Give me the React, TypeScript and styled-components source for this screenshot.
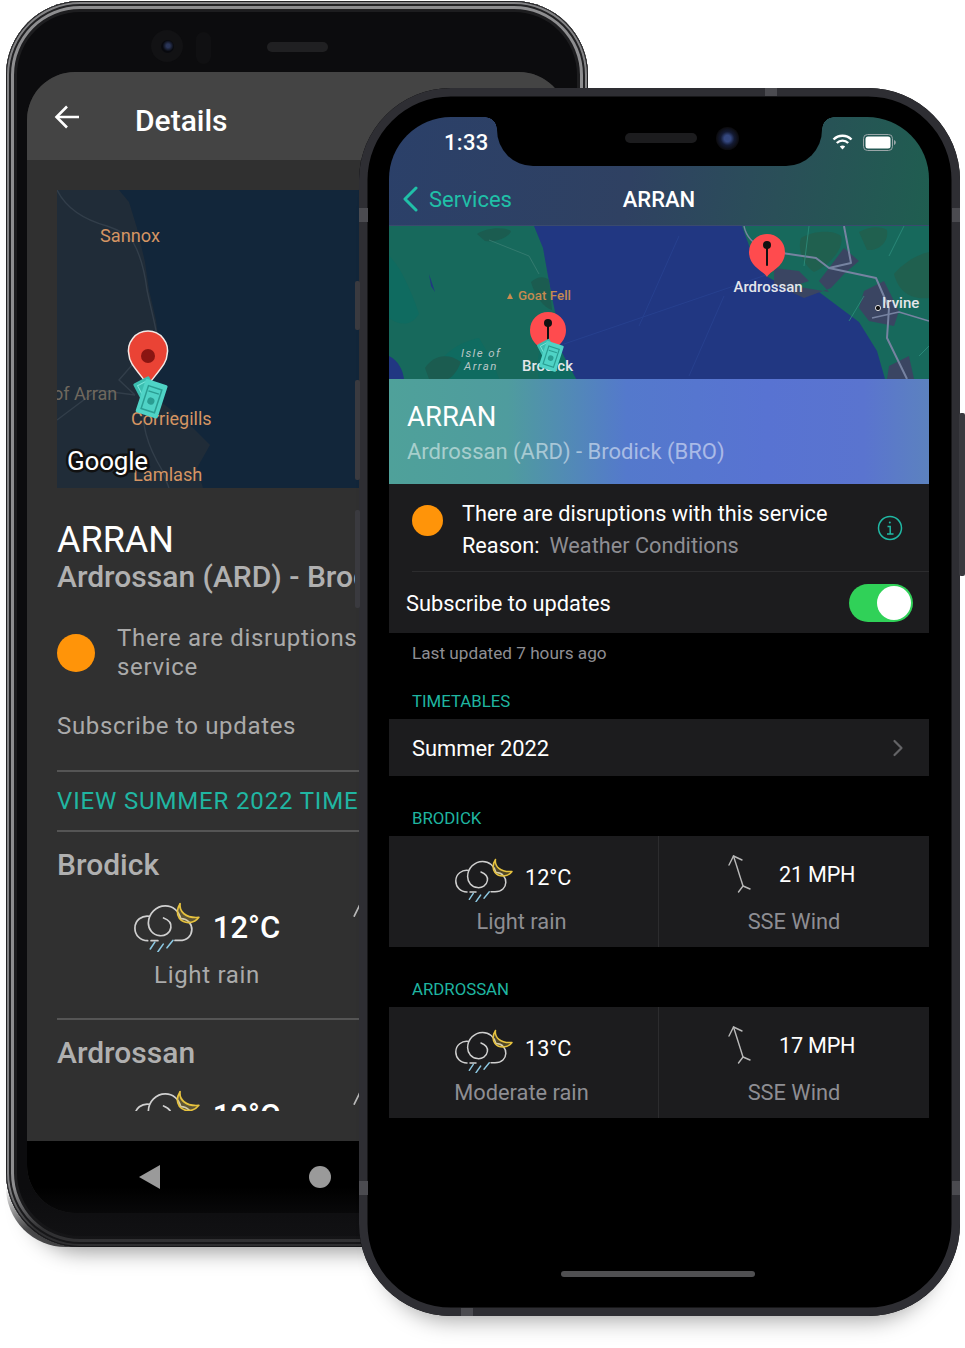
import React from 'react';
import styled, { createGlobalStyle } from 'styled-components';

const Global = createGlobalStyle`
  html, body { margin: 0; padding: 0; background: #fff; }
  * { box-sizing: border-box; }
`;

const Canvas = styled.div`
  position: relative;
  width: 965px;
  height: 1348px;
  overflow: hidden;
  background: #fff;
  font-family: Roboto, "Liberation Sans", sans-serif;
`;

/* ---------- Android phone ---------- */
const AndroidBody = styled.div`
  position: absolute;
  left: 6px;
  top: 1px;
  width: 582px;
  height: 1246px;
  border-radius: 74px;
  background: #0c0c0e;
  padding: 71px 21px 33px;
  box-shadow:
    inset 0 0 0 1px #222224,
    inset 0 0 0 3px #838385,
    inset 0 0 0 5px #222224,
    inset 0 0 0 8px #8e8e90,
    inset 0 0 0 11px #1d1d1f,
    0 26px 22px -22px rgba(0, 0, 0, 0.42);
  &::after {
    content: '';
    position: absolute;
    left: 0;
    right: 0;
    bottom: 0;
    height: 60px;
    border-radius: 0 0 74px 74px;
    background: linear-gradient(180deg, rgba(18, 18, 20, 0) 0%, rgba(18, 18, 20, 0.75) 70%);
  }
`;
const AndroidCamera = styled.div`
  position: absolute;
  left: 145px;
  top: 29px;
  width: 32px;
  height: 32px;
  border-radius: 50%;
  background: #121214;
  display: flex;
  align-items: center;
  justify-content: center;
  &::after {
    content: '';
    width: 13px;
    height: 13px;
    border-radius: 50%;
    background: radial-gradient(circle at 55% 45%, #2a3558 0 18%, #08090e 55%);
  }
`;
const AndroidSensor = styled.div`
  position: absolute;
  left: 190px;
  top: 31px;
  width: 15px;
  height: 32px;
  border-radius: 8px;
  background: #101012;
`;
const AndroidSpeaker = styled.div`
  position: absolute;
  left: 261px;
  top: 41px;
  width: 61px;
  height: 10px;
  border-radius: 5px;
  background: #202022;
`;
const AndroidScreen = styled.div`
  width: 540px;
  height: 1141px;
  border-radius: 48px;
  overflow: hidden;
  display: flex;
  flex-direction: column;
  background: #303030;
`;
const AppBar = styled.div`
  height: 88px;
  flex: none;
  background: #444444;
  display: flex;
  align-items: center;
  padding: 8px 0 0 27px;
  gap: 55px;
  svg { margin-top: -6px; }
`;
const AppTitle = styled.div`
  color: #fff;
  font-size: 30px;
  font-weight: 500;
`;
const AndroidScroll = styled.div`
  height: 951px;
  flex: none;
  overflow: hidden;
  padding: 30px 30px 0;
`;
const AndroidFill = styled.div`
  height: 30px;
  flex: none;
`;
const AndroidMapBox = styled.div`
  width: 480px;
  height: 298px;
  svg { display: block; }
`;
const ATitle = styled.div`
  margin-top: 34px;
  color: #fff;
  font-size: 36px;
  line-height: 36px;
`;
const ASubtitle = styled.div`
  color: #b0b0b0;
  font-size: 30px;
  font-weight: 500;
  line-height: 38px;
  white-space: nowrap;
`;
const AStatusRow = styled.div`
  margin-top: 28px;
  display: flex;
  align-items: center;
  gap: 22px;
`;
const Dot = styled.div<{ $size: number }>`
  flex: none;
  width: ${p => p.$size}px;
  height: ${p => p.$size}px;
  border-radius: 50%;
  background: #ff9409;
`;
const AStatusText = styled.div`
  width: 400px;
  color: #aaaaaa;
  font-size: 24px;
  line-height: 29px;
  letter-spacing: 0.68px;
`;
const ASubscribe = styled.div`
  margin-top: 29px;
  color: #aaaaaa;
  font-size: 24px;
  line-height: 30px;
  letter-spacing: 0.68px;
`;
const ADivider = styled.div<{ $top: number }>`
  margin-top: ${p => p.$top}px;
  height: 2px;
  background: #555555;
`;
const ALink = styled.div`
  height: 58px;
  display: flex;
  align-items: center;
  color: #20b6a2;
  font-size: 24px;
  letter-spacing: 0.85px;
  white-space: nowrap;
`;
const APlace = styled.div`
  margin-top: 15px;
  color: #b0b0b0;
  font-size: 30px;
  font-weight: 500;
  line-height: 36px;
`;
const AWeather = styled.div`
  margin-top: 21px;
  display: grid;
  grid-template-columns: 300px 1fr;
`;
const AWeatherCell = styled.div`
  display: flex;
  flex-direction: column;
  align-items: center;
`;
const AWeatherTop = styled.div`
  height: 46px;
  display: flex;
  align-items: center;
  gap: 13px;
`;
const ATemp = styled.div`
  color: #fff;
  font-size: 31px;
  font-weight: 500;
`;
const AWeatherLabel = styled.div`
  margin-top: 10px;
  color: #aaaaaa;
  font-size: 24px;
  line-height: 30px;
  letter-spacing: 0.68px;
`;
const AWind = styled.div`
  margin-left: -4px;
`;
const NavBar = styled.div`
  height: 72px;
  flex: none;
  background: #000;
  display: flex;
  align-items: center;
  padding-left: 112px;
  gap: 148px;
`;
const NavCircle = styled.div`
  width: 22px;
  height: 22px;
  border-radius: 50%;
  background: #9a9a9a;
`;

/* ---------- iPhone ---------- */
const IphoneBody = styled.div`
  position: absolute;
  left: 359px;
  top: 88px;
  width: 601px;
  height: 1228px;
  border-radius: 92px;
  background: #000;
  padding: 29px 30px;
  box-shadow:
    inset 0 0 0 8.5px #2e2e33,
    0 26px 22px -22px rgba(0, 0, 0, 0.36);
`;
const SideButton = styled.div<{ $top: number; $h: number; $side: 'l' | 'r' }>`
  position: absolute;
  top: ${p => p.$top}px;
  height: ${p => p.$h}px;
  width: ${p => (p.$side === 'l' ? 5 : 6)}px;
  ${p => (p.$side === 'l' ? 'left: -4px;' : 'right: -5px;')}
  background: #3a3a3f;
  border-radius: 2px;
`;
const Band = styled.div<{ $x: number; $y: number; $w: number; $h: number }>`
  position: absolute;
  left: ${p => p.$x}px;
  top: ${p => p.$y}px;
  width: ${p => p.$w}px;
  height: ${p => p.$h}px;
  background: #4b4b50;
`;
const IScreen = styled.div`
  position: relative;
  width: 540px;
  height: 1170px;
  border-radius: 62px;
  overflow: hidden;
  background: #000;
  display: flex;
  flex-direction: column;
`;
const Notch = styled.div`
  position: absolute;
  left: 108px;
  top: 0;
  width: 325px;
  height: 49px;
  background: #000;
  border-radius: 0 0 36px 36px;
  &::before, &::after {
    content: '';
    position: absolute;
    top: 0;
    width: 12px;
    height: 12px;
  }
  &::before { left: -12px; background: radial-gradient(circle at 0 100%, transparent 11.5px, #000 12px); }
  &::after { right: -12px; background: radial-gradient(circle at 100% 100%, transparent 11.5px, #000 12px); }
`;
const NotchSpeaker = styled.div`
  position: absolute;
  left: 128px;
  top: 16px;
  width: 72px;
  height: 10px;
  border-radius: 5px;
  background: #1c1c1e;
`;
const NotchCamera = styled.div`
  position: absolute;
  left: 219px;
  top: 10px;
  width: 23px;
  height: 23px;
  border-radius: 50%;
  background: radial-gradient(circle at 50% 50%, #34477f 0 20%, #131a33 42%, #0c0c10 68%);
`;
const INavArea = styled.div`
  height: 109px;
  flex: none;
  background: linear-gradient(100deg, #2b4069 0%, #2f4162 45%, #2a4f58 72%, #1f5e50 100%);
  border-bottom: 1px solid #3a4a6e;
`;
const IStatus = styled.div`
  height: 50px;
  display: flex;
  align-items: center;
  padding: 0 33px 0 55px;
  justify-content: space-between;
`;
const ITime = styled.div`
  color: #fff;
  font-size: 22px;
  font-weight: 500;
  letter-spacing: 0.3px;
`;
const IStatusIcons = styled.div`
  display: flex;
  align-items: center;
  gap: 10px;
`;
const INavRow = styled.div`
  position: relative;
  height: 59px;
  padding-top: 5px;
  display: flex;
  align-items: center;
  justify-content: center;
`;
const INavBack = styled.div`
  position: absolute;
  left: 14px;
  top: 5px;
  bottom: 0;
  display: flex;
  align-items: center;
  gap: 11px;
  color: #20c0a8;
  font-size: 22px;
`;
const INavTitle = styled.div`
  color: #fff;
  font-size: 22px;
  font-weight: 500;
`;
const IMapBox = styled.div`
  height: 153px;
  flex: none;
  svg { display: block; }
`;
const IHero = styled.div`
  height: 105px;
  flex: none;
  padding: 20px 18px 0;
  background: linear-gradient(90deg, #4fa19a 0%, #4f9c9e 22%, #5479cc 44%, #5873d2 70%, #5a74cf 88%, #5c82bf 100%);
`;
const IHeroTitle = styled.div`
  color: #fff;
  font-size: 27.5px;
  line-height: 36px;
`;
const IHeroSub = styled.div`
  color: rgba(255, 255, 255, 0.5);
  font-size: 22px;
  line-height: 34px;
`;
const IPanel = styled.div`
  background: #1c1c1e;
  flex: none;
`;
const IStatusRow = styled.div`
  height: 88px;
  position: relative;
  display: flex;
  align-items: center;
  padding: 0 26px 0 23px;
  &::after {
    content: '';
    position: absolute;
    left: 23px;
    right: 0;
    bottom: 0;
    height: 1px;
    background: #2c2c2e;
  }
`;
const IStatusCopy = styled.div`
  flex: 1;
  margin-left: 19px;
  margin-top: 3px;
  color: #fff;
  font-size: 21.7px;
  line-height: 32px;
`;
const Grey = styled.span`
  color: #8e8e93;
  margin-left: 10px;
`;
const IDotWrap = styled.div`
  margin-top: -16px;
`;
const ISubscribe = styled.div`
  height: 61px;
  display: flex;
  align-items: center;
  justify-content: space-between;
  padding: 0 16px 0 17px;
  color: #fff;
  font-size: 21.8px;
  span { margin-top: 2px; }
`;
const Toggle = styled.div`
  width: 64px;
  height: 38px;
  border-radius: 19px;
  background: #30d158;
  padding: 2px;
  display: flex;
  justify-content: flex-end;
  &::after {
    content: '';
    width: 34px;
    height: 34px;
    border-radius: 50%;
    background: #fff;
  }
`;
const ILast = styled.div`
  height: 40px;
  flex: none;
  display: flex;
  align-items: center;
  padding-left: 23px;
  color: #8e8e93;
  font-size: 17.2px;
`;
const ISection = styled.div<{ $h: number }>`
  height: ${p => p.$h}px;
  flex: none;
  display: flex;
  align-items: flex-end;
  padding: 0 0 8px 23px;
  color: #1fb5a0;
  font-size: 16.8px;
  line-height: 20px;
`;
const ITimetable = styled.div`
  height: 57px;
  flex: none;
  background: #1c1c1e;
  display: flex;
  align-items: center;
  justify-content: space-between;
  padding: 2px 25px 0 23px;
  color: #fff;
  font-size: 21.9px;
  svg { margin-top: -2px; }
`;
const IWeatherGrid = styled.div`
  height: 111px;
  flex: none;
  background: #1c1c1e;
  display: grid;
  grid-template-columns: 270px 1fr;
`;
const IWeatherCell = styled.div`
  border-right: 1px solid #2c2c2e;
  padding: 21px 4px 0 0;
  display: flex;
  flex-direction: column;
  align-items: center;
`;
const IWeatherTop = styled.div`
  width: 100%;
  height: 42px;
  padding-left: 66px;
  display: flex;
  align-items: center;
  gap: 12px;
  color: #fff;
  font-size: 21.6px;
  svg { margin-top: 3px; }
  span { margin-top: -1px; }
`;
const IWeatherLabel = styled.div<{ $top: number }>`
  margin-top: ${p => p.$top}px;
  color: #8e8e93;
  font-size: 21.8px;
  line-height: 26px;
`;
const IWindCell = styled.div`
  padding-top: 19px;
  display: flex;
  flex-direction: column;
  align-items: center;
`;
const IWindTop = styled.div`
  width: 100%;
  height: 38px;
  padding-left: 69px;
  display: flex;
  align-items: center;
  gap: 27px;
  color: #fff;
  font-size: 21.6px;
  letter-spacing: -0.2px;
`;
const HomeBar = styled.div`
  position: absolute;
  left: 172px;
  bottom: 10px;
  width: 194px;
  height: 6px;
  border-radius: 3px;
  background: #505052;
`;

/* ---------- drawings ---------- */
const Cloud = ({ w }: { w: number }) => (
  <svg width={w} height={(w * 44) / 58} viewBox="0 0 58 44" fill="none" strokeLinecap="round">
    <g stroke="#cfcfcf" strokeWidth="1.5">
      <path d="M12 34 C5.5 34 0.8 29 0.8 23 C0.8 16 7 11.5 13.5 12.5" />
      <path d="M26 14 C30 15.5 33 18.5 32.4 22.5 C31.6 27.5 27 30 22.5 29.6 C16.5 29 12.6 24 12.6 18.5 C12.8 10 19.5 3.5 27.5 3.4 C34 3.3 39.5 8 41 14.6" />
      <path d="M15 34 L21 34" />
      <path d="M41 14.6 C47.5 14.6 51 19.5 50.8 24.5 C50.6 29.5 47 33.8 40 33.8 L36 33.8" />
    </g>
    <g stroke="#8cc8e2" strokeWidth="1.4">
      <path d="M18.3 35.3 L14.3 41.3" />
      <path d="M25.7 37 L21 43.7" />
      <path d="M34.3 33.7 L29 40.3" />
    </g>
    <path
      d="M40.5 1.5 C39.5 8 45 14.5 57 13.5 C53 19 44.5 19.8 40 14.5 C37.6 11 37.6 6 40.5 1.5 Z"
      fill="#e6c23e"
      fillOpacity="0.25"
      stroke="#e6c23e"
      strokeWidth="1.5"
      strokeLinejoin="round"
    />
  </svg>
);

const WindArrow = ({ h = 38 }: { h?: number }) => (
  <svg width={(h * 24) / 38} height={h} viewBox="0 0 24 38" fill="none" stroke="#b9b9b9" strokeWidth="1.4" strokeLinecap="round" strokeLinejoin="round">
    <path d="M1 10 L5.5 1 L14 5" />
    <path d="M5.5 1 L15 31" />
    <path d="M10.5 37 L15 31 L22 34" />
  </svg>
);

const Money = () => (
  <g>
    <g transform="translate(-5 -9) rotate(-28)">
      <rect x="-9" y="-9" width="18" height="22" fill="#3cbdb0" rx="1.5" />
      <rect x="-5.5" y="-5.5" width="11" height="15" fill="none" stroke="#7de8dc" strokeWidth="1" />
    </g>
    <g transform="translate(1 2) rotate(18)">
      <rect x="-11" y="-18" width="23" height="35" fill="#4fd3c6" rx="1.5" />
      <rect x="-6.5" y="-12" width="14" height="24" fill="none" stroke="#2a9d92" strokeWidth="1.5" />
      <circle cx="0.5" cy="2" r="3.6" fill="#2a9d92" />
      <path d="M-5 -7 H6" stroke="#2a9d92" strokeWidth="1.4" />
    </g>
  </g>
);

const AndroidMap = () => (
  <svg width="480" height="298" viewBox="0 0 480 298">
    <rect width="480" height="298" fill="#12263a" />
    <path d="M0 0 H62 L72 12 L80 38 L88 72 L92 100 L99 130 L103 160 L98 180 L88 200 L108 215 L133 235 L153 255 L140 278 L146 298 H0 Z" fill="#202c38" />
    <g fill="none" stroke="#323e4a" strokeWidth="1.4">
      <path d="M0 0 C10 20 28 30 50 36 C62 40 70 44 76 52 C84 66 88 84 90 100 C94 120 100 140 102 158" />
      <path d="M78 205 L62 190 L75 175 L85 170" />
      <path d="M86 205 C84 235 90 255 105 280 L112 298" />
      <path d="M0 230 L40 200 L78 205" />
    </g>
    <g fontFamily="Roboto, sans-serif" fontSize="18.2" fill="#d59563">
      <text x="43" y="52">Sannox</text>
      <text x="74" y="235" fontSize="18">Corriegills</text>
      <text x="76" y="291">Lamlash</text>
    </g>
    <text x="-4" y="210" fontFamily="Roboto, sans-serif" fontSize="18" fill="#6f685e">of Arran</text>
    <text x="10" y="280" fontFamily="Roboto, sans-serif" fontSize="26" fontWeight="400" fill="#fff" stroke="#111" strokeWidth="5" paintOrder="stroke" letterSpacing="-0.2">Google</text>
    <path d="M91 195 C78 178 72 172 72 165 A19.5 19.5 0 1 1 110 165 C110 172 104 178 91 195 Z" fill="#ea4335" stroke="#f3e9e6" strokeWidth="1.5" />
    <circle cx="91" cy="166" r="7" fill="#8a1512" />
    <g transform="translate(93 207)"><Money /></g>
  </svg>
);

const RedPin = ({ x, y }: { x: number; y: number }) => (
  <g transform={`translate(${x} ${y})`}>
    <path d="M0 24 C-3 18 -18 14 -18 -1 A18 18 0 1 1 18 -1 C18 14 3 18 0 24 Z" fill="#ff4b4e" />
    <path d="M0 -6 L0 12" stroke="#111" strokeWidth="2" strokeLinecap="round" />
    <circle cx="0" cy="-8" r="4" fill="#111" />
  </g>
);

const IosMap = () => (
  <svg width="540" height="153" viewBox="0 0 540 153">
    <rect width="540" height="153" fill="#213782" />
    <g fill="none" stroke="#27408e" strokeWidth="1">
      <path d="M175 118 L380 48" />
      <path d="M250 100 L290 10" />
      <path d="M300 150 L335 70" />
    </g>
    <path d="M0 0 H145 L154 22 L159 50 L164 76 L169 100 L172 125 L187 153 H0 Z" fill="#17695c" />
    <path d="M0 130 C10 135 14 145 15 153 H0 Z" fill="#213782" />
    <g fill="#0f6b60">
      <path d="M0 30 C12 40 24 70 30 88 C22 100 12 100 0 92 Z" />
      <path d="M42 153 C50 128 70 116 90 112 C98 125 106 140 110 153 Z" />
      <path d="M150 153 C146 128 152 108 170 112 L172 125 L187 153 Z" />
    </g>
    <g fill="#1b5c50">
      <path d="M88 8 C95 2 115 0 122 5 C120 12 105 17 96 15 Z" />
      <path d="M142 56 C148 50 156 50 160 54 L163 84 C155 82 146 70 142 56 Z" />
      <path d="M36 142 C44 130 58 126 72 136 C68 146 62 153 58 153 H40 Z" />
    </g>
    <path d="M40 48 L44 60 L46 66 L42 60 Z" fill="#213782" />
    <path d="M100 14 L140 30 L150 48" fill="none" stroke="#3a7f74" strokeWidth="0.8" />
    <path d="M353 0 L362 25 L377 50 L395 60 L430 66 L470 96 L488 125 L496 153 H540 V0 Z" fill="#17695c" />
    <g fill="#20604f">
      <path d="M412 12 C425 4 445 4 452 10 C456 22 440 40 425 46 C415 40 408 24 412 12 Z" />
      <path d="M505 48 C515 36 530 28 540 26 V72 C525 74 510 68 505 48 Z" />
      <path d="M470 6 C480 0 492 0 498 4 C500 16 490 25 478 24 Z" />
    </g>
    <g fill="#3a4562">
      <path d="M385 42 L410 45 L420 55 L405 60 L440 66 L430 55 L440 42 L455 22 L470 35 L455 48 L442 62 L415 72 L385 58 Z" />
      <path d="M475 65 L495 55 L510 85 L505 100 L480 95 L470 82 Z" />
      <path d="M500 140 L520 130 L525 153 H498 Z" />
    </g>
    <g fill="none" stroke="#7683a1" strokeWidth="2" strokeLinejoin="round">
      <path d="M393 27 L427 32 L440 42 L487 52 L500 82 L498 112 L518 153" />
      <path d="M455 0 L462 37 L440 42" />
      <path d="M483 92 L510 86 L540 95" strokeWidth="1.6" />
      <path d="M355 0 C358 15 372 24 393 27" strokeWidth="1.4" />
    </g>
    <g fill="none" stroke="#2f8f7e" strokeWidth="0.8">
      <path d="M500 30 L515 0" />
      <path d="M460 95 L475 70" />
      <path d="M530 130 L540 120" />
      <path d="M415 40 L420 0" />
    </g>
    <circle cx="489" cy="82" r="2.6" fill="#111" stroke="#ddd" strokeWidth="1" />
    <g fontFamily="Roboto, sans-serif">
      <path d="M118 73 L124 73 L121 67 Z" fill="#c98b4f" />
      <text x="129" y="74" fontSize="13.4" fontWeight="500" fill="#c48a50">Goat Fell</text>
      <text x="344.5" y="66" fontSize="15" fontWeight="500" fill="#e4e6ea">Ardrossan</text>
      <text x="493" y="82" fontSize="15" fontWeight="500" fill="#e4e6ea">Irvine</text>
      <text x="72" y="131" fontSize="11.5" fontStyle="italic" letterSpacing="1.4" fill="#b9c6c6">Isle of</text>
      <text x="75" y="144" fontSize="11.5" fontStyle="italic" letterSpacing="1.4" fill="#b9c6c6">Arran</text>
      <text x="133" y="145" fontSize="15" fontWeight="500" fill="#e4e6ea">Brodick</text>
    </g>
    <RedPin x={378} y={27} />
    <RedPin x={159} y={105} />
    <g transform="translate(161 129) scale(0.78)"><Money /></g>
  </svg>
);

const AndroidWeatherBlock = ({ temp, label }: { temp: string; label: string }) => (
  <AWeather>
    <AWeatherCell>
      <AWeatherTop>
        <Cloud w={66} />
        <ATemp>{temp}</ATemp>
      </AWeatherTop>
      <AWeatherLabel>{label}</AWeatherLabel>
    </AWeatherCell>
    <AWind>
      <WindArrow h={46} />
    </AWind>
  </AWeather>
);

const IosWeatherBlock = ({ temp, label, wind }: { temp: string; label: string; wind: string }) => (
  <IWeatherGrid>
    <IWeatherCell>
      <IWeatherTop>
        <Cloud w={58} />
        <span>{temp}</span>
      </IWeatherTop>
      <IWeatherLabel $top={10}>{label}</IWeatherLabel>
    </IWeatherCell>
    <IWindCell>
      <IWindTop>
        <WindArrow />
        <span>{wind}</span>
      </IWindTop>
      <IWeatherLabel $top={16}>SSE Wind</IWeatherLabel>
    </IWindCell>
  </IWeatherGrid>
);

export default function App() {
  return (
    <Canvas>
      <Global />
      <AndroidBody>
        <AndroidCamera />
        <AndroidSensor />
        <AndroidSpeaker />
        <AndroidScreen>
          <AppBar>
            <svg width="26" height="24" viewBox="0 0 26 24" fill="none" stroke="#fff" strokeWidth="2.6">
              <path d="M25 12 H3" />
              <path d="M13 1.5 L2.5 12 L13 22.5" />
            </svg>
            <AppTitle>Details</AppTitle>
          </AppBar>
          <AndroidScroll>
            <AndroidMapBox>
              <AndroidMap />
            </AndroidMapBox>
            <ATitle>ARRAN</ATitle>
            <ASubtitle>Ardrossan (ARD) - Brodick (BRO)</ASubtitle>
            <AStatusRow>
              <Dot $size={38} />
              <AStatusText>There are disruptions with this service</AStatusText>
            </AStatusRow>
            <ASubscribe>Subscribe to updates</ASubscribe>
            <ADivider $top={29} />
            <ALink>VIEW SUMMER 2022 TIMETABLES</ALink>
            <ADivider $top={0} />
            <APlace>Brodick</APlace>
            <AndroidWeatherBlock temp="12°C" label="Light rain" />
            <ADivider $top={28} />
            <APlace>Ardrossan</APlace>
            <AndroidWeatherBlock temp="12°C" label="Light rain" />
          </AndroidScroll>
          <AndroidFill />
          <NavBar>
            <svg width="22" height="24" viewBox="0 0 22 24"><path d="M21 0 V24 L0 12 Z" fill="#9a9a9a" /></svg>
            <NavCircle />
          </NavBar>
        </AndroidScreen>
      </AndroidBody>

      <IphoneBody>
        <SideButton $side="l" $top={193} $h={49} />
        <SideButton $side="l" $top={292} $h={100} />
        <SideButton $side="l" $top={422} $h={98} />
        <SideButton $side="r" $top={325} $h={163} />
        <Band $x={0} $y={120} $w={9} $h={14} />
        <Band $x={593} $y={120} $w={8} $h={14} />
        <Band $x={0} $y={1093} $w={9} $h={14} />
        <Band $x={593} $y={1093} $w={8} $h={14} />
        <Band $x={102} $y={1220} $w={12} $h={8} />
        <Band $x={406} $y={0} $w={12} $h={8} />
        <IScreen>
          <INavArea>
            <IStatus>
              <ITime>1:33</ITime>
              <IStatusIcons>
                <svg width="21" height="16" viewBox="0 0 21 16" fill="none" stroke="#fff" strokeWidth="2.4">
                  <path d="M1.5 5.5 C6.5 0.5 14.5 0.5 19.5 5.5" />
                  <path d="M4.8 9 C8 5.8 13 5.8 16.2 9" />
                  <path d="M10.5 15.5 L7.8 12.5 C9.3 11.2 11.7 11.2 13.2 12.5 Z" fill="#fff" stroke="none" />
                </svg>
                <svg width="33" height="17" viewBox="0 0 33 17">
                  <rect x="0.5" y="0.5" width="29" height="16" rx="4" fill="none" stroke="#9aa6a8" />
                  <rect x="2.5" y="2.5" width="25" height="12" rx="2.5" fill="#fff" />
                  <path d="M31 6 C32.2 6.4 32.8 7.3 32.8 8.5 C32.8 9.7 32.2 10.6 31 11 Z" fill="#9aa6a8" />
                </svg>
              </IStatusIcons>
            </IStatus>
            <INavRow>
              <INavBack>
                <svg width="15" height="26" viewBox="0 0 15 26" fill="none" stroke="#20c0a8" strokeWidth="3" strokeLinecap="round" strokeLinejoin="round">
                  <path d="M13 2 L2 13 L13 24" />
                </svg>
                Services
              </INavBack>
              <INavTitle>ARRAN</INavTitle>
            </INavRow>
          </INavArea>
          <Notch>
            <NotchSpeaker />
            <NotchCamera />
          </Notch>
          <IMapBox>
            <IosMap />
          </IMapBox>
          <IHero>
            <IHeroTitle>ARRAN</IHeroTitle>
            <IHeroSub>Ardrossan (ARD) - Brodick (BRO)</IHeroSub>
          </IHero>
          <IPanel>
            <IStatusRow>
              <IDotWrap><Dot $size={31} /></IDotWrap>
              <IStatusCopy>
                There are disruptions with this service
                <br />
                Reason:<Grey>Weather Conditions</Grey>
              </IStatusCopy>
              <svg width="26" height="26" viewBox="0 0 26 26" fill="none" stroke="#20b8a4" strokeWidth="1.5">
                <circle cx="13" cy="13" r="11.5" />
                <path d="M10.5 11.5 H13.2 V19 M10 19 H16.5" />
                <circle cx="12.8" cy="7.5" r="1" fill="#20b8a4" stroke="none" />
              </svg>
            </IStatusRow>
            <ISubscribe>
              <span>Subscribe to updates</span>
              <Toggle />
            </ISubscribe>
          </IPanel>
          <ILast>Last updated 7 hours ago</ILast>
          <ISection $h={46}>TIMETABLES</ISection>
          <ITimetable>
            Summer 2022
            <svg width="12" height="18" viewBox="0 0 12 18" fill="none" stroke="#636366" strokeWidth="2.2" strokeLinecap="round" strokeLinejoin="round">
              <path d="M2.5 2 L9.5 9 L2.5 16" />
            </svg>
          </ITimetable>
          <ISection $h={60}>BRODICK</ISection>
          <IosWeatherBlock temp="12°C" label="Light rain" wind="21 MPH" />
          <ISection $h={60}>ARDROSSAN</ISection>
          <IosWeatherBlock temp="13°C" label="Moderate rain" wind="17 MPH" />
          <HomeBar />
        </IScreen>
      </IphoneBody>
    </Canvas>
  );
}
